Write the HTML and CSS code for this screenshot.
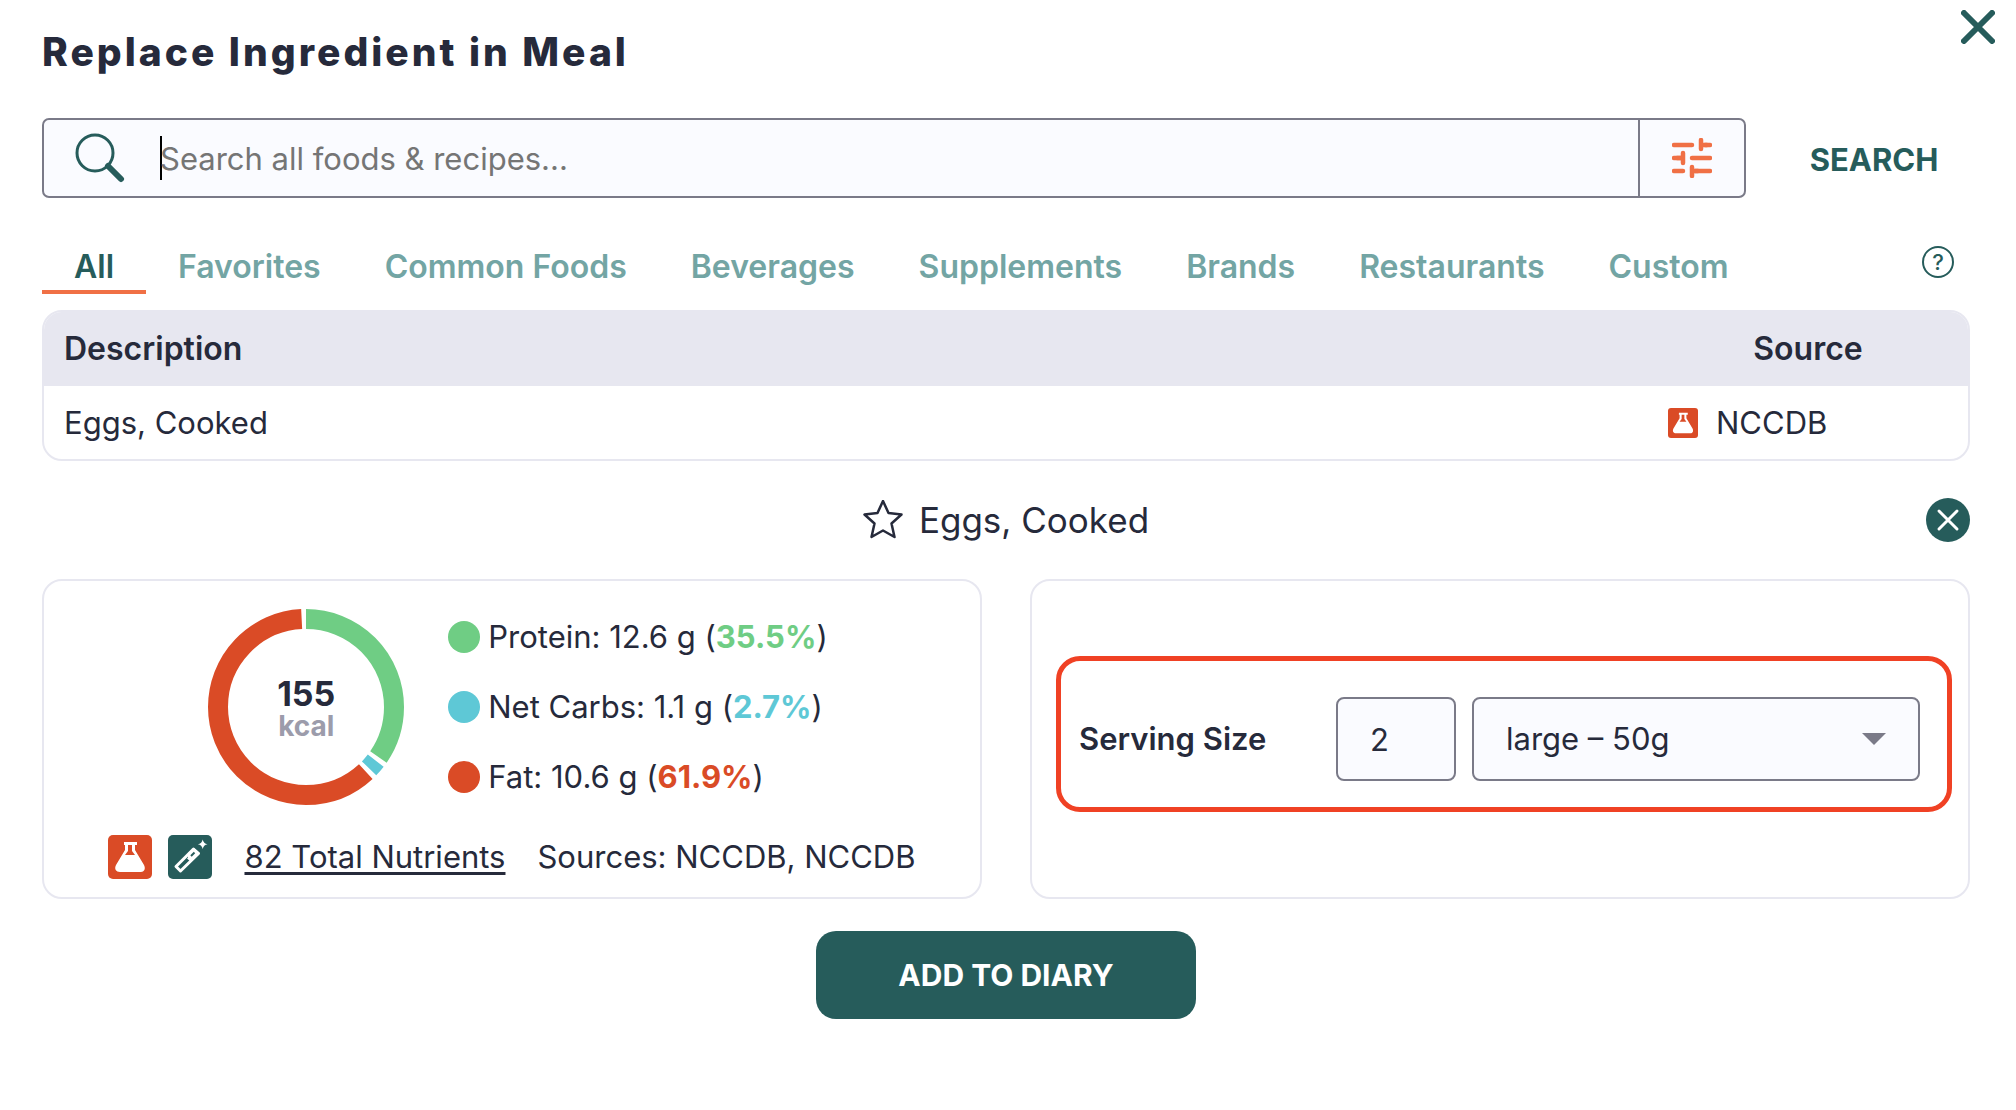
FILE: index.html
```html
<!DOCTYPE html>
<html lang="en">
	<head>
		<meta charset="utf-8">
		<title>Replace Ingredient in Meal</title>
		<link rel="stylesheet" href="styles.css">
	</head>

	<body>
		<!-- shared icon -->
		<svg class="defs" width="0" height="0">
			<symbol id="flask" viewBox="0 0 44 44">
				<path fill="#fff" fill-rule="evenodd" d="M16 7h13v3h-2v5l9 15c2 4 0 7-3 7H12c-4 0-6-3-4-7l9-15v-5h-1zM20 10v6l-3 4h10l-3-4v-6z"/>
			</symbol>
		</svg>

		<div class="dialog">
			<button class="close" aria-label="Close">
				<svg width="34" height="34" viewBox="0 0 34 34"><path d="M3 3l28 28M31 3L3 31"/></svg>
			</button>
			<h1>Replace Ingredient in Meal</h1>

			<div class="search-row">
				<div class="search-box">
					<label class="search-label" for="search" aria-label="Search foods">
						<svg width="50" height="50" viewBox="0 0 50 50"><circle cx="20" cy="20" r="18"/><path d="M33 33l13 13"/></svg>
					</label>
					<span class="caret"></span>
					<input type="text" id="search" class="search-input" placeholder="Search all foods &amp; recipes...">
					<button class="filter" aria-label="Filters">
						<svg width="40" height="40" viewBox="0 0 40 40"><path class="rail" d="M2 7h18M33 7h5M2 20h7M20 20h18M2 33h9M23 33h15"/><path class="rail" d="M29 2v9M29 7h6M11 15v10M5 20h6M20 29v9M20 33h6"/></svg>
					</button>
				</div>
				<button class="search-btn">SEARCH</button>
			</div>

			<div class="tabs">
				<button class="tab active">All</button>
				<button class="tab">Favorites</button>
				<button class="tab">Common Foods</button>
				<button class="tab">Beverages</button>
				<button class="tab">Supplements</button>
				<button class="tab">Brands</button>
				<button class="tab">Restaurants</button>
				<button class="tab">Custom</button>
				<button class="help" aria-label="Help">?</button>
			</div>

			<div class="results">
				<table>
					<thead>
						<tr>
							<th>Description</th>
							<th class="source">Source</th>
						</tr>
					</thead>
					<tbody>
						<tr>
							<td>Eggs, Cooked</td>
							<td class="source">
								<div class="source-name">
									<svg class="badge small" viewBox="0 0 44 44"><use href="#flask"/></svg>
									NCCDB
								</div>
							</td>
						</tr>
					</tbody>
				</table>
			</div>

			<div class="food-head">
				<button class="star" aria-label="Favorite">
					<svg width="40" height="40" viewBox="0 0 40 40"><path d="M20 1l5.500 12 13 1.500-10 9 3 13.500L20 30.500 8.500 37l3-13.500-10-9 13-1.500z"/></svg>
				</button>
				<h2>Eggs, Cooked</h2>
				<button class="dismiss" aria-label="Remove food">
					<svg width="44" height="44" viewBox="0 0 44 44"><path d="M13 13l18 18M31 13L13 31"/></svg>
				</button>
			</div>

			<div class="cards">
				<div class="card nutrition">
					<div class="macros">
						<div class="donut">
							<svg viewBox="0 0 196 196">
								<g transform="rotate(-90 98 98)">
									<circle class="ring protein" cx="98" cy="98" r="88" pathLength="3600" stroke-dasharray="1246 2354"/>
									<circle class="ring carbs" cx="98" cy="98" r="88" pathLength="3600" stroke-dasharray="66 3534" stroke-dashoffset="-1276"/>
									<circle class="ring fat" cx="98" cy="98" r="88" pathLength="3600" stroke-dasharray="2199 1401" stroke-dashoffset="-1372"/>
								</g>
							</svg>
							<div class="energy"><strong>155</strong><span>kcal</span></div>
						</div>
						<ul class="legend">
							<li class="protein"><i></i><span>Protein: 12.6 g (<b>35.5%</b>)</span></li>
							<li class="carbs"><i></i><span>Net Carbs: 1.1 g (<b>2.7%</b>)</span></li>
							<li class="fat"><i></i><span>Fat: 10.6 g (<b>61.9%</b>)</span></li>
						</ul>
					</div>
					<div class="sources">
						<svg class="badge" viewBox="0 0 44 44"><use href="#flask"/></svg>
						<svg class="badge wand" viewBox="0 0 44 44">
							<path class="outline" d="M25.500 14l5 4.500L12.500 36 8 31.500z"/>
							<path fill="#fff" d="M20 18l6-5 6 5-9 9-4-3.500 1-1zM34.700 4.500q.8 4 4.800 4.800-4 .8-4.800 4.800-.8-4-4.800-4.800 4-.8 4.800-4.800z"/>
							<path class="slot" d="M23 21l3.500-3.500"/>
						</svg>
						<a href="#">82 Total Nutrients</a>
						<span>Sources: NCCDB, NCCDB</span>
					</div>
				</div>

				<div class="card serving">
					<div class="serving-box">
						<label for="amount">Serving Size</label>
						<input type="text" id="amount" class="amount" value="2">
						<div class="unit">
							<select aria-label="Serving unit">
								<option>large – 50g</option>
							</select>
						</div>
					</div>
				</div>
			</div>

			<button class="add">ADD TO DIARY</button>
		</div>
	</body>
</html>
```

FILE: styles.css
```css
*{
	margin:0;
	padding:0;
	box-sizing:border-box;
}
body{
	background:#fff;
	color:#262a3b;
	font-family:Inter,"Liberation Sans",sans-serif;
	font-size:31px;
	line-height:40px;
}
button,input,select{
	font:inherit;
	color:inherit;
	background:none;
	border:none;
	outline:none;
}
button{
	cursor:pointer;
}
svg{
	display:block;
	flex-shrink:0;
	fill:none;
}
.defs{
	position:absolute;
}
.dialog{
	position:relative;
	display:flex;
	flex-direction:column;
	padding:28px 46px 40px 42px;
}
.close{
	position:absolute;
	top:10px;
	right:21px;
}
.close svg{
	stroke:#265c5b;
	stroke-width:6;
	stroke-linecap:round;
}
h1{
	font-size:39px;
	line-height:48px;
	font-weight:800;
	letter-spacing:3px;
}

/* search */
.search-row{
	display:flex;
	margin-top:42px;
}
.search-box{
	display:flex;
	align-items:center;
	flex:1;
	height:80px;
	border:2px solid #7a7a88;
	border-radius:7px;
	background:#fafbff;
}
.search-label{
	margin:0 35px 0 31px;
}
.search-label svg{
	stroke:#265c5b;
	stroke-width:3;
	stroke-linecap:round;
}
.search-label path{
	stroke-width:6;
}
.caret{
	width:2px;
	height:44px;
	margin-right:-2px;
	background:#000;
}
.search-input{
	flex:1;
	min-width:0;
	height:76px;
}
.search-input::placeholder{
	color:#757575;
	opacity:1;
}
.filter{
	display:flex;
	align-items:center;
	justify-content:center;
	width:106px;
	height:76px;
	border-left:2px solid #7a7a88;
}
.rail{
	stroke:#f07045;
	stroke-width:4.5;
	stroke-linecap:round;
}
.search-btn{
	width:224px;
	padding:4px 0 0 32px;
	color:#265c5b;
	font-weight:700;
}

/* tabs */
.tabs{
	display:flex;
	align-items:flex-start;
	margin-top:40px;
}
.tab{
	height:56px;
	padding:9px 32px 3px;
	border-bottom:4px solid transparent;
	color:#73a5a4;
	font-size:32px;
	font-weight:600;
}
.tab.active{
	color:#265c5b;
	border-color:#f07045;
}
.help{
	width:32px;
	height:32px;
	margin:8px 16px 0 auto;
	border:2px solid #265c5b;
	border-radius:50%;
	color:#265c5b;
	font-size:22px;
	line-height:28px;
	font-weight:500;
}

/* results */
.results{
	margin-top:16px;
	border:2px solid #e7e7f0;
	border-radius:20px;
	overflow:hidden;
}
table{
	width:100%;
	border-collapse:collapse;
}
th,td{
	height:74px;
	padding:0 20px;
	text-align:left;
	font-weight:400;
}
td{
	height:73px;
}
th{
	background:#e7e7f0;
	font-size:32px;
	font-weight:600;
}
.source{
	width:320px;
	text-align:center;
}
.source-name{
	display:flex;
	align-items:center;
	gap:18px;
}
.badge{
	width:44px;
	height:44px;
	border-radius:5px;
	background:#da4b26;
}
.badge.small{
	width:30px;
	height:30px;
	border-radius:3px;
}

/* selected food */
.food-head{
	position:relative;
	display:flex;
	align-items:center;
	justify-content:center;
	gap:16px;
	height:118px;
}
.star svg{
	stroke:#262a3b;
	stroke-width:2.5;
	stroke-linejoin:round;
}
h2{
	font-size:35px;
	font-weight:400;
}
.dismiss{
	position:absolute;
	right:0;
	border-radius:50%;
	background:#265c5b;
}
.dismiss svg{
	stroke:#fff;
	stroke-width:3;
	stroke-linecap:round;
}

.cards{
	display:grid;
	grid-template-columns:1fr 1fr;
	gap:48px;
}
.card{
	border:2px solid #e7e7f0;
	border-radius:20px;
}
.nutrition{
	padding:28px 0 18px;
}
.macros{
	display:flex;
	align-items:center;
	justify-content:center;
	gap:44px;
	padding-left:12px;
}
.donut{
	display:grid;
	width:196px;
	height:196px;
}
.donut svg,.energy{
	grid-area:1/1;
}
.ring{
	stroke:currentColor;
	stroke-width:20;
}
.legend i{
	width:32px;
	height:32px;
	border-radius:50%;
	background:currentColor;
}
.protein{
	color:#6fcd84;
}
.carbs{
	color:#5ec8d6;
}
.fat{
	color:#da4b26;
}
.energy{
	display:flex;
	flex-direction:column;
	align-items:center;
	justify-content:center;
	padding-top:6px;
	line-height:32px;
}
.energy strong{
	font-size:34px;
}
.energy span{
	color:#9c9cab;
	font-size:28px;
	font-weight:700;
}
.legend{
	display:flex;
	flex-direction:column;
	gap:30px;
	list-style:none;
}
.legend li{
	display:flex;
	align-items:center;
	gap:8px;
}
.legend span{
	color:#262a3b;
}
.protein b{
	color:#6fcd84;
}
.carbs b{
	color:#5ec8d6;
}
.fat b{
	color:#da4b26;
}
.sources{
	display:flex;
	align-items:center;
	justify-content:center;
	gap:16px;
	margin-top:30px;
}
.sources a{
	margin:0 16px;
	color:inherit;
	text-underline-offset:4px;
	text-decoration-thickness:3px;
}
.wand{
	background:#265c5b;
}
.outline{
	stroke:#fff;
	stroke-width:3;
	stroke-linejoin:round;
}
.slot{
	stroke:#265c5b;
	stroke-width:2;
}

/* serving size */
.serving{
	display:flex;
	align-items:center;
	padding:0 16px 10px 24px;
}
.serving-box{
	display:flex;
	align-items:center;
	flex:1;
	gap:16px;
	padding:36px 27px 26px 18px;
	border:5px solid #f04124;
	border-radius:24px;
}
.serving-box label{
	flex:1;
	font-weight:600;
}
.amount,.unit{
	height:84px;
	border:2px solid #7a7a88;
	border-radius:8px;
	background:#fafbff;
}
.amount{
	width:120px;
	padding:0 32px;
}
.unit{
	display:flex;
	align-items:center;
	flex:0 1 448px;
	padding-right:32px;
}
.unit:after{
	content:"";
	border:12px solid transparent;
	border-top-color:#7a7a88;
	border-bottom:none;
}
.unit select{
	flex:1;
	height:80px;
	padding-left:32px;
	appearance:none;
}

.add{
	align-self:center;
	width:380px;
	height:88px;
	margin-top:32px;
	border-radius:20px;
	background:#265c5b;
	color:#fff;
	font-size:30px;
	font-weight:700;
}
```
